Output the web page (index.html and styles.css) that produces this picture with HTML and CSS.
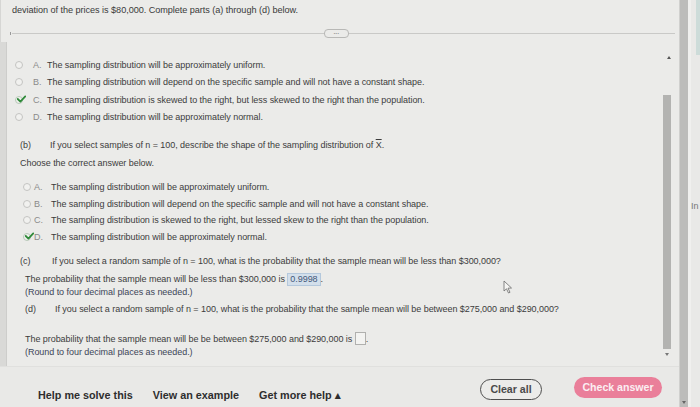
FILE: index.html
```html
<!DOCTYPE html>
<html lang="en">
<head>
<meta charset="utf-8">
<title>Sampling distribution</title>
<link rel="stylesheet" href="styles.css">
</head>
<body>
<div class="app">
  <div class="main">
    <div class="intro">deviation of the prices is $80,000. Complete parts (a) through (d) below.</div>
    <div class="divider">
      <span class="tick"></span>
      <span class="rule rule-left"></span>
      <span class="more">&bull;&bull;&bull;</span>
      <span class="rule"></span>
    </div>
    <div class="body">
      <div class="content">
        <ul class="opts opts-a">
          <li><span class="radio"></span><span class="letter">A.</span><span>The sampling distribution will be approximately uniform.</span></li>
          <li><span class="radio"></span><span class="letter">B.</span><span>The sampling distribution will depend on the specific sample and will not have a constant shape.</span></li>
          <li><span class="radio checked"><svg viewBox="0 0 12 10" class="check"><path d="M1 5 L4.5 8.5 L11 1.5" /></svg></span><span class="letter">C.</span><span>The sampling distribution is skewed to the right, but less skewed to the right than the population.</span></li>
          <li><span class="radio"></span><span class="letter">D.</span><span>The sampling distribution will be approximately normal.</span></li>
        </ul>

        <div class="part part-b"><span class="plabel">(b)</span><span>If you select samples of n = 100, describe the shape of the sampling distribution of <span class="xbar">X</span>.</span></div>
        <div class="choose">Choose the correct answer below.</div>
        <ul class="opts opts-b">
          <li><span class="radio"></span><span class="letter">A.</span><span>The sampling distribution will be approximately uniform.</span></li>
          <li><span class="radio"></span><span class="letter">B.</span><span>The sampling distribution will depend on the specific sample and will not have a constant shape.</span></li>
          <li><span class="radio"></span><span class="letter">C.</span><span>The sampling distribution is skewed to the right, but lessed skew to the right than the population.</span></li>
          <li><span class="radio checked"><svg viewBox="0 0 12 10" class="check"><path d="M1 5 L4.5 8.5 L11 1.5" /></svg></span><span class="letter">D.</span><span>The sampling distribution will be approximately normal.</span></li>
        </ul>

        <div class="part part-c"><span class="plabel">(c)</span><span>If you select a random sample of n = 100, what is the probability that the sample mean will be less than $300,000?</span></div>
        <div class="answer answer-c">The probability that the sample mean will be less than $300,000 is <span class="filled">0.9998</span>.</div>
        <div class="round">(Round to four decimal places as needed.)</div>

        <div class="part part-d"><span class="plabel">(d)</span><span>If you select a random sample of n = 100, what is the probability that the sample mean will be between $275,000 and $290,000?</span></div>
        <div class="answer answer-d">The probability that the sample mean will be be between $275,000 and $290,000 is <span class="empty"></span>.</div>
        <div class="round">(Round to four decimal places as needed.)</div>
      </div>
      <div class="vscroll">
        <span class="arrow up"></span>
        <div class="track"><div class="thumb"></div></div>
        <span class="arrow down"></span>
      </div>
    </div>
    <div class="footer">
      <div class="links">
        <span class="link">Help me solve this</span>
        <span class="link">View an example</span>
        <span class="link">Get more help &#9652;</span>
      </div>
      <div class="actions">
        <span class="btn clear">Clear all</span>
        <span class="btn check-btn">Check answer</span>
      </div>
    </div>
    <svg class="cursor" viewBox="0 0 10 14"><path d="M1 1 L1 11 L3.5 8.8 L5.5 13 L7 12.3 L5 8.2 L8.5 8 Z" /></svg>
  </div>
  <div class="outer-scroll"><span class="arrow down small"></span></div>
  <div class="side">
    <div class="side-top"></div>
    <div class="side-text">In</div>
  </div>
</div>
</body>
</html>
```

FILE: styles.css
```css
* { box-sizing: border-box; }
html, body { margin: 0; padding: 0; }
body {
  width: 700px;
  height: 407px;
  overflow: hidden;
  background: #e6e6e4;
  font-family: "Liberation Sans", Arial, sans-serif;
  color: #3c3c3c;
}
.app {
  display: flex;
  height: 407px;
}
.main {
  position: relative;
  width: 679px;
  display: flex;
  flex-direction: column;
  background: #ebebe9;
  border-left: 1px solid #d6d6d4;
}
.intro {
  font-size: 9.15px;
  line-height: 14px;
  padding: 3px 0 7px 11px;
  height: 24px;
  letter-spacing: -0.05px;
  color: #3a3a3a;
}
.divider {
  height: 18px;
  display: flex;
  align-items: center;
  padding: 0 4px 0 9px;
}
.tick {
  width: 1px;
  height: 3px;
  background: #999;
  margin-right: 1px;
}
.rule {
  flex: 1;
  height: 1px;
  background: #c9c9c7;
}
.rule-left { flex: none; width: 312px; }
.more {
  width: 25px;
  height: 9px;
  border: 1px solid #b8b8b6;
  border-radius: 4px;
  font-size: 4px;
  line-height: 7px;
  text-align: center;
  color: #8a8a8a;
  letter-spacing: 0.5px;
}
.body {
  flex: 1;
  display: flex;
  border-left: 7px solid #d9d9d7;
  margin-left: -1px;
  position: relative;
}
.body::before {
  content: "";
  position: absolute;
  left: -1px;
  top: 0;
  bottom: 0;
  width: 1px;
  background: #cdcdcb;
}
.content {
  flex: 1;
  font-size: 9px;
  letter-spacing: -0.05px;
  color: #3c3c3c;
}
.opts {
  list-style: none;
  margin: 0;
  padding: 0;
}
.opts li {
  display: flex;
  align-items: center;
}
.opts-a { margin-top: 14px; padding-left: 8px; }
.opts-a li { height: 17.5px; }
.opts-b { margin-top: 8.6px; padding-left: 16px; }
.opts-b li { height: 16.7px; }
.radio {
  position: relative;
  width: 8px;
  height: 8px;
  border-radius: 50%;
  border: 1px solid #c4c4c2;
  background: #f1f1ef;
  flex: none;
}
.radio.checked { border-color: #b8c8b8; }
.check {
  position: absolute;
  left: 1px;
  top: -2px;
  width: 9px;
  height: 8px;
  fill: none;
  stroke: #2f8a3a;
  stroke-width: 2.4;
  stroke-linecap: round;
  stroke-linejoin: round;
}
.letter {
  width: 14px;
  margin-left: 10px;
  color: #8a8a8a;
  flex: none;
}
.opts-b .letter { width: 17px; margin-left: 3px; }
.part {
  display: flex;
  line-height: 14px;
}
.plabel { flex: none; width: 30px; }
.part-b { margin-top: 12px; padding-left: 13px; }
.part-c { margin-top: 8.5px; padding-left: 13px; }
.part-c .plabel { width: 32px; }
.part-d { margin-top: 3px; padding-left: 18px; }
.xbar {
  text-decoration: overline;
}
.choose {
  margin-top: 4px;
  line-height: 14px;
  padding-left: 13px;
}
.answer {
  padding-left: 18px;
  line-height: 14px;
}
.answer-c { margin-top: 4px; }
.answer-d { margin-top: 16px; }
.round {
  padding-left: 18px;
  line-height: 13px;
  color: #3d4558;
}
.filled {
  display: inline-block;
  background: #d3dfeb;
  border: 1px solid #b4c8dc;
  color: #44587a;
  padding: 0 2px;
  line-height: 11px;
}
.empty {
  display: inline-block;
  width: 11px;
  height: 13px;
  vertical-align: -3px;
  border: 1px solid #b0b0ae;
  background: #f3f3f1;
}
.vscroll {
  width: 8px;
  margin-right: 8px;
  display: flex;
  flex-direction: column;
  align-items: center;
  padding-top: 12px;
}
.arrow {
  width: 0;
  height: 0;
  border-left: 2.5px solid transparent;
  border-right: 2.5px solid transparent;
  flex: none;
}
.arrow.up { border-bottom: 3px solid #555; margin: 2px 0 0 3px; }
.arrow.down { border-top: 3px solid #777; margin-bottom: 10px; }
.track {
  flex: 1;
  width: 8px;
  padding-top: 36px;
  padding-bottom: 4px;
  display: flex;
}
.thumb {
  flex: 1;
  background: #b3b3b1;
}
.footer {
  height: 41px;
  display: flex;
  align-items: flex-start;
  padding: 0 17px 0 38px;
  background: #e9e9e7;
  border-top: 1px solid #e0e0de;
  margin-left: -1px;
}
.links {
  display: flex;
  gap: 20px;
  font-weight: bold;
  font-size: 10.8px;
  line-height: 13px;
  color: #2e2e2e;
  margin-top: 22px;
}
.actions {
  margin-left: auto;
  display: flex;
  align-items: flex-start;
  gap: 32px;
}
.btn {
  font-weight: bold;
  font-size: 10.6px;
  border-radius: 12px;
  text-align: center;
}
.clear {
  width: 62px;
  height: 21px;
  line-height: 18px;
  border: 1.5px solid #4e4e4e;
  color: #4a4a4a;
  background: #ececea;
  margin-top: 12px;
}
.check-btn {
  width: 88px;
  height: 21px;
  line-height: 21px;
  background: #ea7f9a;
  color: #fbeef2;
  margin-top: 10px;
}
.cursor {
  position: absolute;
  left: 502px;
  top: 280px;
  width: 10px;
  height: 14px;
  fill: #f5f5f3;
  stroke: #6a6a6a;
  stroke-width: 0.8;
}
.outer-scroll {
  width: 9px;
  background: #bcbcba;
  display: flex;
  flex-direction: column;
  justify-content: flex-end;
  align-items: center;
  border-left: 1px solid #d0d0ce;
}
.arrow.small { border-top: 3px solid #666; margin-bottom: 3px; }
.side {
  flex: 1;
  background: #e9e9e7;
  border-left: 3px solid #f0f0ee;
  display: flex;
  flex-direction: column;
}
.side-top {
  height: 55px;
  margin-left: 5px;
  background: #cddcd9;
}
.side-text {
  margin-top: 146px;
  font-size: 9px;
  color: #777;
  white-space: nowrap;
  overflow: hidden;
  padding-left: 0;
}
```
